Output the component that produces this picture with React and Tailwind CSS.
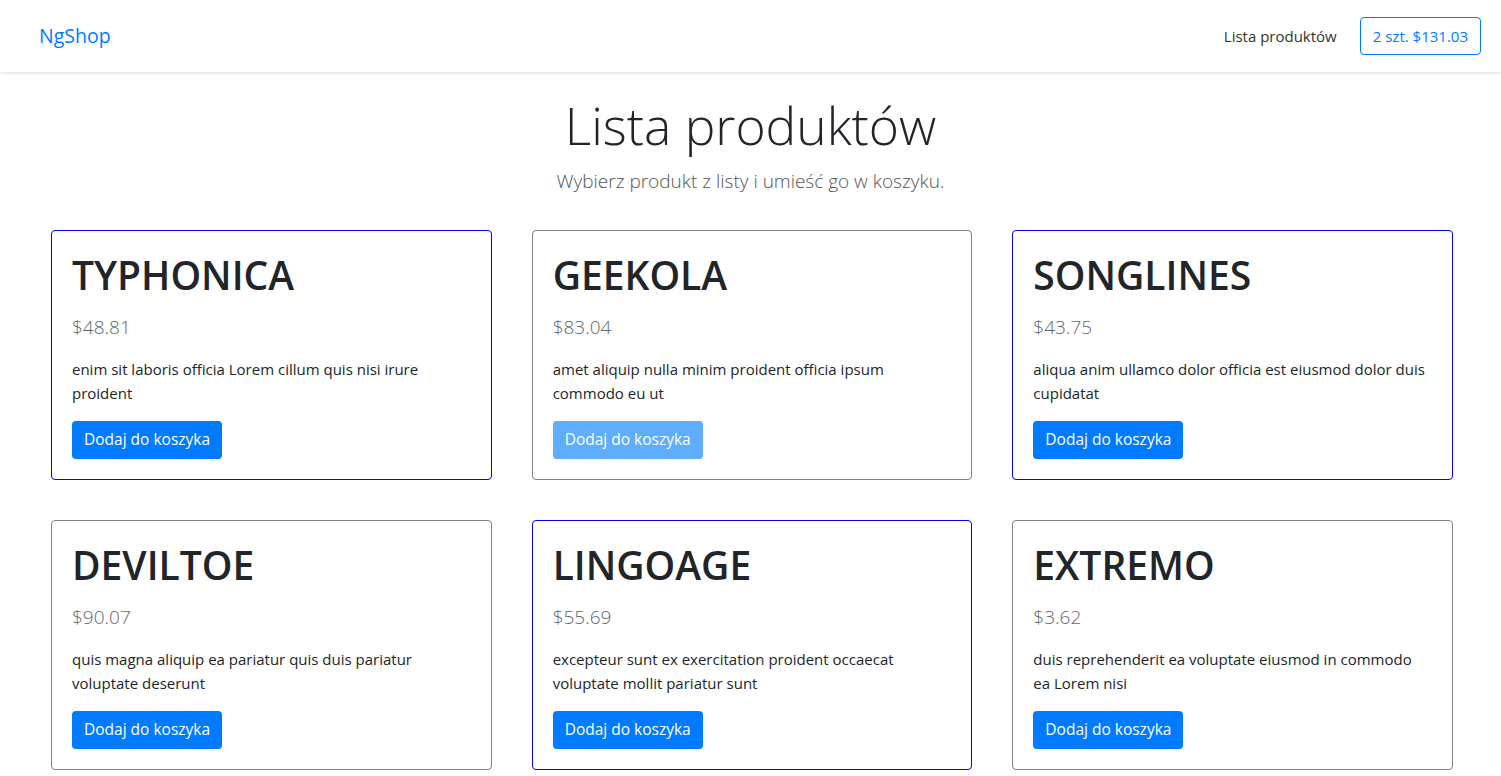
import React from "react";

const products = [
  { name: "TYPHONICA", price: "$48.81", desc: "enim sit laboris officia Lorem cillum quis nisi irure proident", blue: true },
  { name: "GEEKOLA", price: "$83.04", desc: "amet aliquip nulla minim proident officia ipsum commodo eu ut", blue: false, disabled: true },
  { name: "SONGLINES", price: "$43.75", desc: "aliqua anim ullamco dolor officia est eiusmod dolor duis cupidatat", blue: true },
  { name: "DEVILTOE", price: "$90.07", desc: "quis magna aliquip ea pariatur quis duis pariatur voluptate deserunt", blue: false },
  { name: "LINGOAGE", price: "$55.69", desc: "excepteur sunt ex exercitation proident occaecat voluptate mollit pariatur sunt", blue: true },
  { name: "EXTREMO", price: "$3.62", desc: "duis reprehenderit ea voluptate eiusmod in commodo ea Lorem nisi", blue: false },
];

const font = { fontFamily: '"Open Sans", "Noto Sans", sans-serif' };

export default function App() {
  return (
    <div className="min-h-screen bg-white text-[#212529]" style={font}>
      <nav className="flex h-[72px] items-center justify-between pl-[39px] pr-[20px] shadow-[0_1px_3px_rgba(0,0,0,0.15)] relative z-10">
        <a className="text-[19.5px] leading-[30px] text-[#007bff]">NgShop</a>
        <div className="flex items-center gap-[23px]">
          <a className="text-[15px] text-[#333]">Lista produktów</a>
          <button className="h-[38px] rounded-[4px] border border-[#007bff] px-[12px] text-[15px] text-[#007bff]">2 szt. $131.03</button>
        </div>
      </nav>
      <div className="pt-[20px] text-center">
        <h1 className="text-[51.5px] font-light leading-[67px] text-[#212529]">Lista produktów</h1>
        <p className="mt-[7px] text-[19px] font-light leading-[30px] text-[#555]">Wybierz produkt z listy i umieść go w koszyku.</p>
      </div>
      <div className="grid grid-cols-3 gap-x-[40px] gap-y-[40px] pl-[51px] pr-[48px] pt-[34px] pb-[10px]">
        {products.map((p) => (
          <div
            key={p.name}
            className={`rounded-[4px] border p-[20px] ${p.blue ? "border-[#0000ff]" : "border-[#808080]"}`}
          >
            <h2 className="mb-[13px] text-[39px] font-semibold leading-[48px] text-[#212529]">{p.name}</h2>
            <p className="mb-[15px] text-[19px] font-light leading-[30px] text-[#5f676e]">{p.price}</p>
            <p className="mb-[16px] text-[15px] leading-[24px] text-[#212529]">{p.desc}</p>
            <button
              className={`h-[38px] rounded-[4px] px-[12px] text-[15.5px] text-white ${p.disabled ? "bg-[#5eadff]" : "bg-[#007bff]"}`}
            >
              Dodaj do koszyka
            </button>
          </div>
        ))}
      </div>
    </div>
  );
}
